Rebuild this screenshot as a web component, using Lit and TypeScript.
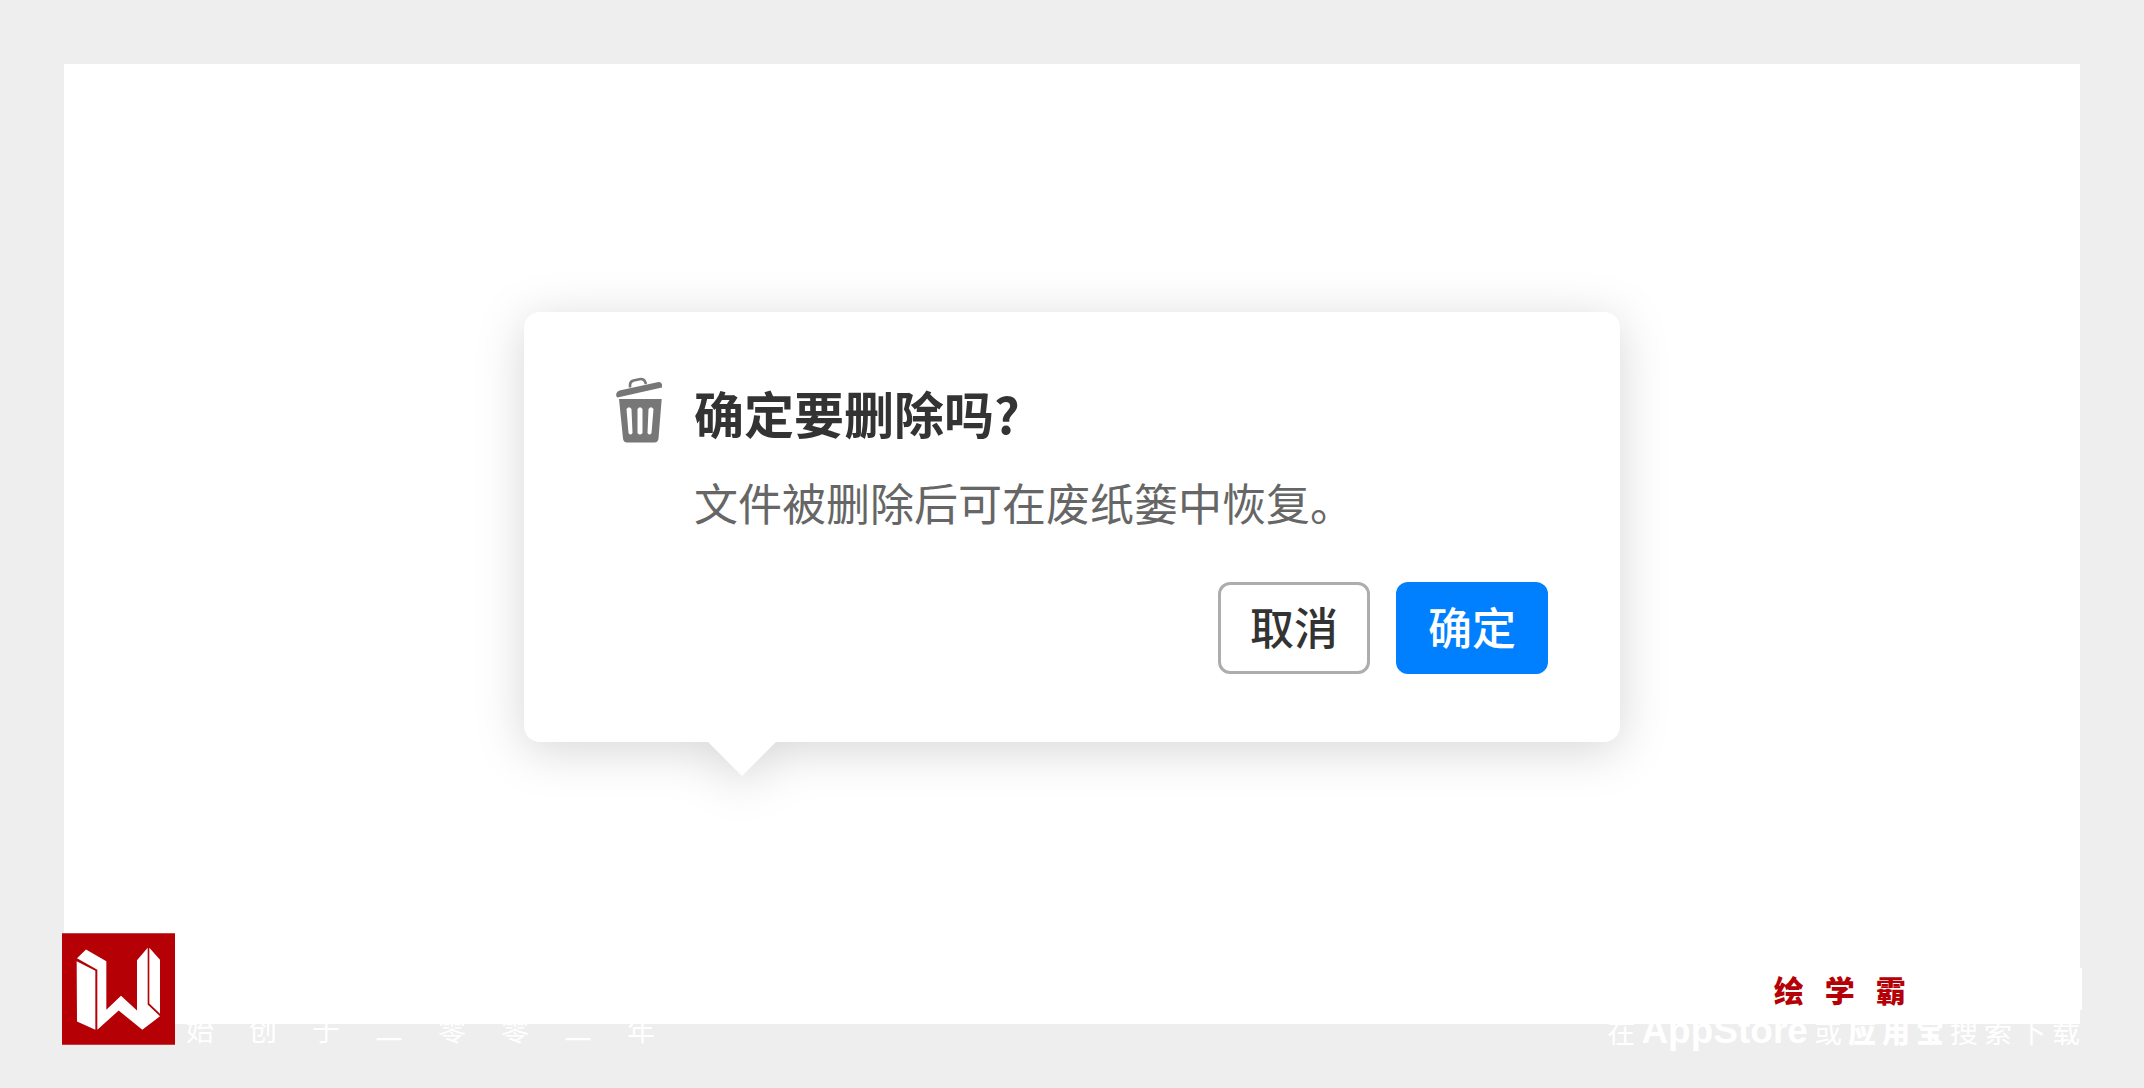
import { LitElement, html, css } from "lit";
import { customElement } from "lit/decorators.js";

@customElement("confirm-popover")
class ConfirmPopover extends LitElement {
  static styles = css`
    :host {
      display: block;
      width: min(1096px, 100%);
    }
    .card {
      position: relative;
      box-sizing: border-box;
      padding: 64px 72px 68px 90px;
      border-radius: 16px;
      background: #fff;
      filter: drop-shadow(0 8px 24px rgba(0, 0, 0, 0.16));
    }
    .card::after {
      content: "";
      position: absolute;
      left: 194px;
      bottom: -24px;
      width: 48px;
      height: 48px;
      background: #fff;
      transform: rotate(45deg);
    }
    .content {
      display: flex;
      gap: 24px;
    }
    .trash {
      flex: none;
      width: 56px;
      height: 72px;
    }
    .title {
      margin: 0;
      padding-top: 4px;
      font-size: 50px;
      line-height: 64px;
      font-weight: 700;
      color: #333;
    }
    .text {
      margin: 26px 0 0;
      font-size: 44px;
      line-height: 64px;
      color: #666;
    }
    .actions {
      display: flex;
      justify-content: flex-end;
      gap: 26px;
      margin-top: 48px;
    }
    .button {
      box-sizing: border-box;
      width: 152px;
      height: 92px;
      padding: 0 0 4px;
      border: 3px solid #adadad;
      border-radius: 12px;
      background: #fff;
      color: #333;
      font: inherit;
      font-size: 44px;
      line-height: 64px;
      font-weight: 500;
    }
    .primary {
      border-color: #007fff;
      background: #007fff;
      color: #fff;
    }
  `;

  render() {
    return html`
      <section class="card" role="dialog" aria-labelledby="title" aria-describedby="text">
        <div class="content">
          <svg class="trash" viewBox="0 0 56 72" aria-hidden="true">
            <path d="M16 11.500 V9 Q16 5.500 19.500 4.500 L25.500 3.200 Q29.500 2.500 31 5.500 L32 8" fill="none" stroke="#777" stroke-width="2.600" />
            <path d="M5.500 14.500 L44.500 6 Q47.500 5.500 48 8.500 V11.500 L3.500 21.500 Q1.500 20.500 2.500 17 Q3.500 15 5.500 14.500 Z" fill="#777" />
            <path d="M5 23 H47.700 L44.500 62.500 Q44 66.500 40.500 66.500 H13 Q9.500 66.500 9 62.500 Z M12.500 33 L14.500 57 Q16.500 60 18.500 57 L17.500 33 Q15 29.500 12.500 33 Z M23.500 33 V57 Q26 60 28.500 57 V33 Q26 29.500 23.500 33 Z M34.500 33 L33.500 57 Q35.500 60 37.500 57 L39.500 33 Q37 29.500 34.500 33 Z" fill="#777" fill-rule="evenodd" />
          </svg>
          <div>
            <h1 class="title" id="title">确定要删除吗?</h1>
            <p class="text" id="text">文件被删除后可在废纸篓中恢复。</p>
          </div>
        </div>
        <div class="actions">
          <button class="button" type="button">取消</button>
          <button class="button primary" type="button">确定</button>
        </div>
      </section>
    `;
  }
}

@customElement("app-root")
class AppRoot extends LitElement {
  static styles = css`
    :host {
      display: block;
      position: relative;
      box-sizing: border-box;
      min-height: 100vh;
      padding: 64px;
      background: #eee;
      font-family: "Noto Sans CJK SC", sans-serif;
    }
    .stage {
      display: flex;
      justify-content: center;
      align-items: flex-start;
      box-sizing: border-box;
      min-height: calc(100vh - 128px);
      padding-top: 248px;
      background: #fff;
    }
    .founder {
      position: absolute;
      left: 62px;
      bottom: 43px;
      display: flex;
      align-items: flex-end;
      gap: 11px;
    }
    .logo {
      width: 113px;
      height: 112px;
    }
    .spaced {
      display: flex;
      color: #fff;
      font-size: 28px;
      line-height: 28px;
    }
    .since {
      gap: 35px;
      padding-bottom: 2px;
    }
    .promo {
      position: absolute;
      right: 62px;
      bottom: 36px;
      display: flex;
      flex-direction: column;
    }
    .brand {
      justify-content: center;
      gap: 21px;
      padding-right: 10px;
      background: #fff;
      color: #b50005;
      font-size: 30px;
      line-height: 42px;
      font-weight: 900;
    }
    .download {
      gap: 6px;
      align-items: baseline;
      padding-right: 2px;
      line-height: 42px;
    }
    .store {
      font-family: "Liberation Sans", sans-serif;
      font-size: 37px;
      font-weight: 700;
    }
    .strong {
      font-weight: 900;
    }
  `;

  render() {
    return html`
      <main class="stage"><confirm-popover></confirm-popover></main>
      <div class="founder">
        <svg class="logo" viewBox="0 0 339 335" role="img" aria-label="W">
          <path fill="#b50005" d="M0 0H339V335H0Z" />
          <path fill="#fff" d="M45 75L72 49L133 84V230L177 188L225 232V81L257 44V214L294 249L241 290L170 232L106 290V110Z" />
          <path fill="#fff" d="M44 84L100 113V290L45 265Z M262 44L294 80V242L262 211Z" />
        </svg>
        <div class="spaced since">${[..."始创于二零零二年"].map((c) => html`<span>${c}</span>`)}</div>
      </div>
      <div class="promo">
        <div class="spaced brand">${[..."绘学霸"].map((c) => html`<span>${c}</span>`)}</div>
        <div class="spaced download">
          <span>在</span><span class="store">AppStore</span><span>或</span>
          ${[..."应用宝"].map((c) => html`<span class="strong">${c}</span>`)}
          ${[..."搜索下载"].map((c) => html`<span>${c}</span>`)}
        </div>
      </div>
    `;
  }
}
